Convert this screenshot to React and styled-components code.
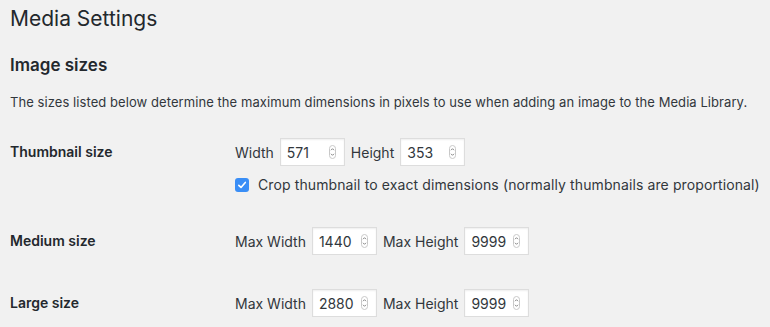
import React from 'react'
import styled, { createGlobalStyle } from 'styled-components'

const GlobalStyle = createGlobalStyle`
  body {
    margin: 0;
    background: #f1f1f1;
    color: #23282d;
    font-family: Inter, "Liberation Sans", Arial, sans-serif;
  }
`

const Page = styled.div`
  padding: 0 10px;
`

const Title = styled.h1`
  margin: 0;
  padding-top: 5px;
  font-size: 21px;
  font-weight: 400;
  line-height: 28px;
  color: #23282d;
`

const SectionTitle = styled.h2`
  margin: 21px 0 0;
  font-size: 17px;
  font-weight: 600;
  line-height: 22px;
  color: #23282d;
`

const Description = styled.p`
  margin: 16px 0 0;
  font-size: 13px;
  line-height: 20px;
  letter-spacing: 0.07px;
  color: #32373c;
`

const Form = styled.div`
  display: flex;
  flex-direction: column;
  gap: 34px;
  margin-top: 26px;
`

const Row = styled.div`
  display: grid;
  grid-template-columns: 225px 1fr;
`

const Label = styled.div`
  font-size: 14px;
  font-weight: 600;
  line-height: 28px;
  color: #23282d;
`

const Fields = styled.div`
  display: flex;
  flex-direction: column;
  gap: 11px;
`

const Line = styled.div`
  display: flex;
  align-items: center;
  gap: 6px;
  font-size: 14px;
  color: #32373c;
`

const InputWrap = styled.div`
  position: relative;
  width: 65px;
  height: 28px;
`

const Input = styled.input`
  box-sizing: border-box;
  width: 100%;
  height: 100%;
  padding: 0 0 0 6px;
  border: 1px solid #ddd;
  background: #fff;
  box-shadow: inset 0 1px 2px rgba(0, 0, 0, 0.07);
  font: inherit;
  font-size: 14px;
  color: #32373c;
  outline: none;
`

const Spinner = styled.svg`
  position: absolute;
  right: 9px;
  top: 7px;
  width: 7px;
  height: 14px;
`

const CheckLine = styled.label`
  display: flex;
  align-items: center;
  gap: 9px;
  font-size: 14px;
  line-height: 16px;
  letter-spacing: 0.11px;
  color: #32373c;
`

const Box = styled.span`
  display: inline-flex;
  align-items: center;
  justify-content: center;
  width: 14px;
  height: 14px;
  border-radius: 3px;
  background: #3a8ef6;
`

const NumberField = ({ value }) => (
  <InputWrap>
    <Input type="text" defaultValue={value} />
    <Spinner viewBox="0 0 7 14">
      <rect x="0.5" y="0.5" width="6" height="13" rx="3" fill="#fff" stroke="#c8c8c8" />
      <path d="M2 5.2 L3.5 3.7 L5 5.2" fill="none" stroke="#777" strokeWidth="0.9" />
      <path d="M2 8.8 L3.5 10.3 L5 8.8" fill="none" stroke="#777" strokeWidth="0.9" />
    </Spinner>
  </InputWrap>
)

const sizes = [
  { name: 'Medium size', w: '1440', h: '9999' },
  { name: 'Large size', w: '2880', h: '9999' },
]

export default function App() {
  return (
    <Page>
      <GlobalStyle />
      <Title>Media Settings</Title>
      <SectionTitle>Image sizes</SectionTitle>
      <Description>
        The sizes listed below determine the maximum dimensions in pixels to use when adding an image to the Media Library.
      </Description>
      <Form>
        <Row>
          <Label>Thumbnail size</Label>
          <Fields>
            <Line>
              Width <NumberField value="571" />
              Height <NumberField value="353" />
            </Line>
            <CheckLine>
              <Box>
                <svg width="10" height="10" viewBox="0 0 10 10">
                  <path d="M1.8 5.3 L4 7.4 L8.3 2.4" fill="none" stroke="#fff" strokeWidth="1.6" strokeLinecap="round" strokeLinejoin="round" />
                </svg>
              </Box>
              Crop thumbnail to exact dimensions (normally thumbnails are proportional)
            </CheckLine>
          </Fields>
        </Row>
        {sizes.map((s) => (
          <Row key={s.name}>
            <Label>{s.name}</Label>
            <Line>
              Max Width <NumberField value={s.w} />
              Max Height <NumberField value={s.h} />
            </Line>
          </Row>
        ))}
      </Form>
    </Page>
  )
}
